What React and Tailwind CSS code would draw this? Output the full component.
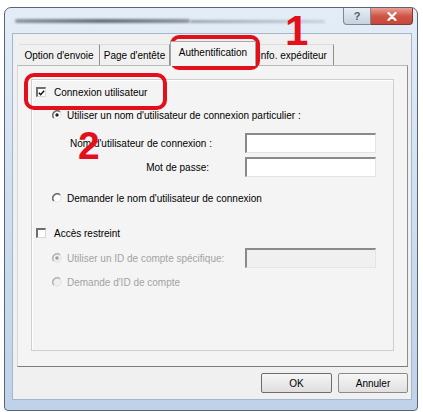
import React from 'react';

// classic sunken checkbox
const Checkbox = ({ checked }) => (
  <span className="w-[10px] h-[10px] shrink-0 bg-white border-t-2 border-l-2 border-r border-b border-t-[#6f6f6f] border-l-[#6f6f6f] border-r-[#d8d8d8] border-b-[#d8d8d8] flex items-center justify-center">
    {checked && (
      <svg width="8" height="8" viewBox="0 0 8 8">
        <path d="M1 3.8 L3 6 L7 1.4" stroke="#111" strokeWidth="1.7" fill="none" />
      </svg>
    )}
  </span>
);

const Radio = ({ checked, disabled }) => (
  <svg width="10" height="10" viewBox="0 0 10 10" className="shrink-0">
    <circle cx="5" cy="5" r="4.4" fill={disabled ? '#f0f0f0' : '#fff'} />
    <path d="M1.9 8.1 A4.4 4.4 0 0 1 8.1 1.9" stroke={disabled ? '#b4b4b4' : '#6a6a6a'} strokeWidth="1.5" fill="none" />
    <path d="M8.1 1.9 A4.4 4.4 0 0 1 1.9 8.1" stroke="#e2e2e2" strokeWidth="1" fill="none" />
    {checked && <circle cx="5" cy="5" r="1.7" fill={disabled ? '#9c9c9c' : '#222'} />}
  </svg>
);

const Field = ({ disabled }) => (
  <div
    className={`w-[131px] h-[20px] shrink-0 border-t-2 border-l-2 border-r border-b border-t-[#8a8a8a] border-l-[#8a8a8a] border-r-[#e4e4e4] border-b-[#e4e4e4] ${
      disabled ? 'bg-[#f0f0f0]' : 'bg-white'
    }`}
  />
);

const tabs = [
  { label: "Option d'envoie", w: 'w-[81px]' },
  { label: "Page d'entête", w: 'w-[70px]' },
  { label: 'Authentification', w: 'w-[86px]', active: true },
  { label: 'Info. expéditeur', w: 'w-[78px]', left: true },
];

export default function App() {
  return (
    <div className="relative w-[423px] h-[412px] overflow-hidden bg-white font-['Liberation_Sans',Arial,sans-serif] text-[10px] text-black">
      {/* Window frame */}
      <div className="ml-[4px] mt-[7px] w-[414px] h-[404px] rounded-t-[7px] rounded-b-[4px] border border-[#5a6573] bg-gradient-to-b from-[#e4edf7] via-[#cfdef0] to-[#bfd2e9] flex flex-col">
        {/* Title bar */}
        <div className="h-[25px] shrink-0 flex items-start">
          <div className="flex-1 pt-[11px] pl-[10px] pr-[18px] flex items-center">
            <div className="h-[4px] w-[175px] bg-gradient-to-r from-[#8d96a1] via-[#646d78] to-[#8b949f] blur-[1px] rounded-full" />
            <div className="h-[3px] w-[135px] bg-gradient-to-r from-[#9aa3ae] to-[#c8d0da] blur-[1px] rounded-full" />
          </div>
          <div className="flex mr-[4px]">
            <div className="w-[28px] h-[17px] rounded-bl-[4px] border border-t-0 border-[#7d8896] bg-gradient-to-b from-[#e8eef5] to-[#c6d2df] flex items-center justify-center text-[11px] text-[#55606c] font-bold">
              ?
            </div>
            <div className="w-[42px] h-[17px] rounded-br-[4px] border border-l-0 border-t-0 border-[#7a3a35] bg-gradient-to-b from-[#e8a195] via-[#cf5546] to-[#c7483b] flex items-center justify-center">
              <svg width="10" height="9" viewBox="0 0 10 9">
                <path d="M1.5 1 L8.5 8 M8.5 1 L1.5 8" stroke="#fff" strokeWidth="2.2" strokeLinecap="round" />
              </svg>
            </div>
          </div>
        </div>

        {/* Client area */}
        <div className="ml-[7px] mr-[5px] mb-[10px] flex-1 bg-[#f0f0f0] border border-[#a6b6ca] flex flex-col pl-[4px] pt-[7px]">
          {/* Tabs */}
          <div className="h-[24px] flex items-end pl-[2px]">
            {tabs.map((t) =>
              t.active ? (
                <div
                  key={t.label}
                  className={`${t.w} h-[25px] -mb-px relative z-10 bg-[#f4f4f4] border-t border-x border-[#a5a5a5] flex items-center justify-center pb-[3px]`}
                >
                  {t.label}
                </div>
              ) : (
                <div
                  key={t.label}
                  className={`${t.w} h-[21px] border-t border-r border-t-[#dcdcdc] border-r-[#8f8f8f] flex items-center pt-px ${
                    t.left ? 'justify-start pl-[2px]' : 'justify-center'
                  }`}
                >
                  {t.label}
                </div>
              )
            )}
          </div>

          {/* Tab panel */}
          <div className="w-[391px] h-[302px] bg-[#f4f4f4] border border-t-[#b9b9b9] border-l-[#d8d8d8] border-r-[#8e8e8e] border-b-[#7c7c7c] pl-[13px] pt-[13px]">
            {/* Group box */}
            <div className="w-[363px] h-[272px] border border-[#cfcfcf] shadow-[inset_1px_1px_0_#fff] flex flex-col pl-[4px] pt-[4px]">
              <div className="h-[16px] flex items-center gap-[8px]">
                <Checkbox checked />
                <span>Connexion utilisateur</span>
              </div>

              <div className="mt-[7px] h-[16px] flex items-center gap-[5px] pl-[16px]">
                <Radio checked />
                <span>Utiliser un nom d'utilisateur de connexion particulier :</span>
              </div>

              <div className="mt-[10px] h-[20px] flex items-center">
                <span className="w-[176px] text-right">Nom d'utilisateur de connexion :</span>
                <span className="w-[33px]" />
                <Field />
              </div>

              <div className="mt-[4px] h-[20px] flex items-center">
                <span className="w-[173px] text-right">Mot de passe:</span>
                <span className="w-[36px]" />
                <Field />
              </div>

              <div className="mt-[13px] h-[16px] flex items-center gap-[5px] pl-[16px]">
                <Radio />
                <span>Demander le nom d'utilisateur de connexion</span>
              </div>

              <div className="mt-[19px] h-[16px] flex items-center gap-[8px]">
                <Checkbox />
                <span>Accès restreint</span>
              </div>

              <div className="mt-[7px] h-[20px] flex items-center pl-[16px]">
                <Radio checked disabled />
                <span className="ml-[5px] w-[178px] text-[#a3a3a3]">Utiliser un ID de compte spécifique:</span>
                <Field disabled />
              </div>

              <div className="mt-[6px] h-[16px] flex items-center gap-[5px] pl-[16px]">
                <Radio disabled />
                <span className="text-[#a3a3a3]">Demande d'ID de compte</span>
              </div>
            </div>
          </div>

          {/* Buttons */}
          <div className="w-[391px] mt-[6px] flex justify-end gap-[6px]">
            <button className="w-[71px] h-[20px] rounded-[2px] border border-[#6c6c6c] bg-gradient-to-b from-[#f6f6f6] to-[#dedede] text-[10px]">
              OK
            </button>
            <button className="w-[70px] h-[20px] rounded-[2px] border border-[#8a8a8a] bg-gradient-to-b from-[#f6f6f6] to-[#e0e0e0] text-[10px]">
              Annuler
            </button>
          </div>
        </div>
      </div>

      {/* Red annotations */}
      <div className="absolute left-[170px] top-[35px] w-[90px] h-[35px] rounded-[9px] border-[4px] border-[#e3101b]" />
      <div className="absolute left-[24px] top-[73px] w-[143px] h-[37px] rounded-[10px] border-[4px] border-[#e3101b]" />
      <div className="absolute left-[285px] top-[16px] text-[42px] leading-[30px] font-bold text-[#e3101b]">1</div>
      <div className="absolute left-[78px] top-[126px] text-[39px] leading-none font-bold text-[#e3101b]">2</div>
    </div>
  );
}
